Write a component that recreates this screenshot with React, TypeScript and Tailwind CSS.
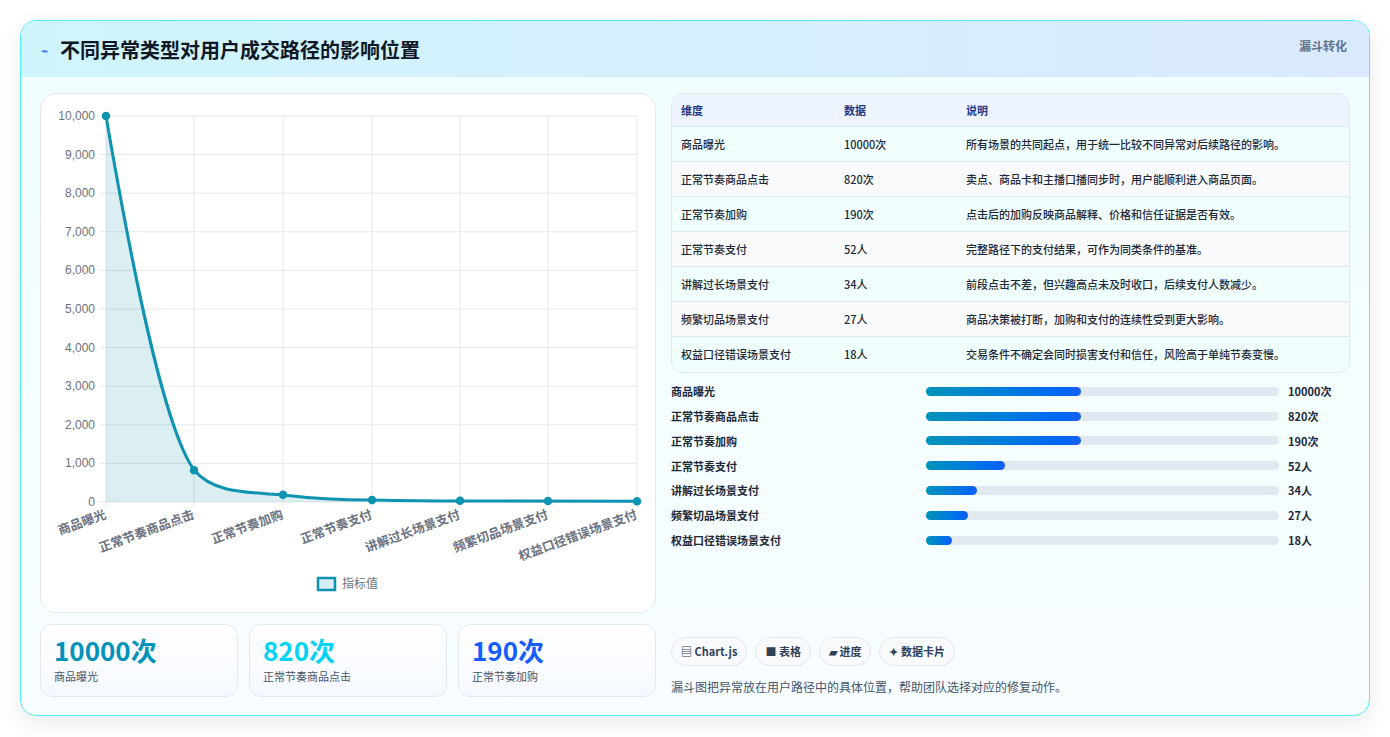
import React from "react";

const F = { fontFamily: '"Noto Sans CJK SC", "Noto Sans", sans-serif' };
const rows = [
  ["商品曝光", "10000次", "所有场景的共同起点，用于统一比较不同异常对后续路径的影响。"],
  ["正常节奏商品点击", "820次", "卖点、商品卡和主播口播同步时，用户能顺利进入商品页面。"],
  ["正常节奏加购", "190次", "点击后的加购反映商品解释、价格和信任证据是否有效。"],
  ["正常节奏支付", "52人", "完整路径下的支付结果，可作为同类条件的基准。"],
  ["讲解过长场景支付", "34人", "前段点击不差，但兴趣高点未及时收口，后续支付人数减少。"],
  ["频繁切品场景支付", "27人", "商品决策被打断，加购和支付的连续性受到更大影响。"],
  ["权益口径错误场景支付", "18人", "交易条件不确定会同时损害支付和信任，风险高于单纯节奏变慢。"],
];
const bars = [44, 44, 44, 22.5, 14.5, 12, 7.5];
const xs = [105, 193, 282, 371, 459, 547, 636];
const vals = [10000, 820, 190, 52, 34, 27, 18];
const yOf = (v: number) => 501 - v * 0.0386;

function Chart() {
  const curve = "M105,115 C135,290 165,430 193,469 C212,492 245,491 282,494 C315,498 340,499 371,499 C420,500 450,500 459,500 L636,500.3";
  return (
    <svg width="615" height="519" viewBox="40 93 615 519" style={{ fontFamily: '"Liberation Sans", "Noto Sans CJK SC", sans-serif' }}>
      {[0, 1, 2, 3, 4, 5, 6, 7, 8, 9, 10].map((i) => {
        const y = 501 - i * 38.6;
        return (
          <g key={i}>
            <line x1="99" x2="636" y1={y} y2={y} stroke="#e5e7eb" />
            <text x="94" y={y + 4} textAnchor="end" fontSize="12" fill="#6b7280">{(i * 1000).toLocaleString("en-US")}</text>
          </g>
        );
      })}
      {xs.map((x) => <line key={x} x1={x} x2={x} y1="115" y2="507" stroke="#e5e7eb" />)}
      <path d={curve + " L636,501 L105,501 Z"} fill="#0e93b0" fillOpacity="0.15" />
      <path d={curve} fill="none" stroke="#0e93b0" strokeWidth="3" />
      {xs.map((x, i) => <circle key={x} cx={x} cy={yOf(vals[i])} r="3.5" fill="#0e93b0" stroke="#0e93b0" strokeWidth="1.5" />)}
      {rows.map((r, i) => (
        <text key={i} transform={`translate(${xs[i] + 1},${517}) rotate(-20)`} textAnchor="end" fontSize="12.5" fill="#6b7280" fontWeight="bold" style={F}>{r[0]}</text>
      ))}
      <rect x="317" y="577" width="17" height="12" fill="#d7eef4" stroke="#0e93b0" strokeWidth="2.5" />
      <text x="341" y="587" fontSize="12" fill="#6b7280" style={F}>指标值</text>
    </svg>
  );
}

export default function App() {
  return (
    <div className="min-h-[737px] bg-white p-5" style={F}>
      <div className="rounded-2xl border border-cyan-300 overflow-hidden bg-gradient-to-b from-[#f0fdfe] to-[#f8fdff] shadow-[0_8px_24px_rgba(0,0,0,0.08)] h-[696px]">
        <div className="h-[56px] flex items-start justify-between px-5 bg-gradient-to-r from-[#cff5fc] to-[#dbeafe]">
          <div className="flex items-center gap-3 mt-[14px]">
            <span className="text-blue-600 text-xs">⌁</span>
            <span className="text-[20px] font-bold text-gray-900">不同异常类型对用户成交路径的影响位置</span>
          </div>
          <span className="text-[12px] font-bold text-slate-500 mt-[16px] mr-[2px]">漏斗转化</span>
        </div>
        <div className="flex gap-[15px] px-[19px] pt-[16px]">
          <div className="w-[616px] flex flex-col gap-[11px]">
            <div className="h-[520px] rounded-2xl border border-slate-200 bg-white overflow-hidden"><Chart /></div>
            <div className="grid grid-cols-3 gap-[11px]">
              {[["10000次", "商品曝光", "text-cyan-600"], ["820次", "正常节奏商品点击", "text-cyan-400"], ["190次", "正常节奏加购", "text-blue-600"]].map(([v, l, c]) => (
                <div key={l} className="h-[73px] rounded-xl border border-slate-200 bg-gradient-to-b from-white to-[#f5f9ff] px-[13px] pt-[8px]">
                  <div className={`text-[26px] font-bold leading-[34px] ${c}`}>{v}</div>
                  <div className="text-[11px] text-slate-600 mt-[1px]">{l}</div>
                </div>
              ))}
            </div>
          </div>
          <div className="flex-1 flex flex-col">
            <div className="rounded-xl border border-slate-200 overflow-hidden">
              <div className="flex h-[33px] items-center bg-[#eef4ff] border-b border-slate-200 text-[11px] font-bold text-[#1e3a8a]">
                <div className="w-[172px] pl-[9px]">维度</div><div className="w-[122px]">数据</div><div>说明</div>
              </div>
              {rows.map((r, i) => (
                <div key={i} className={`flex h-[35px] items-center text-[11px] font-medium text-gray-800 ${i < 6 ? "border-b border-slate-200" : ""} ${i % 2 ? "bg-[#f8fafc]" : "bg-[#f0fefe]"}`}>
                  <div className="w-[172px] pl-[9px]">{r[0]}</div><div className="w-[122px]">{r[1]}</div><div>{r[2]}</div>
                </div>
              ))}
            </div>
            <div className="mt-[6px] flex flex-col">
              {rows.map((r, i) => (
                <div key={i} className="flex items-center h-[24.8px] text-[11px] font-bold text-gray-800">
                  <div className="w-[255px]">{r[0]}</div>
                  <div className="w-[353px] h-[9px] rounded-full bg-slate-200">
                    <div className="h-full rounded-full bg-gradient-to-r from-cyan-600 to-blue-600" style={{ width: `${bars[i]}%` }} />
                  </div>
                  <div className="ml-[9px]">{r[1]}</div>
                </div>
              ))}
            </div>
            <div className="mt-auto mb-[1px] flex flex-col">
              <div className="flex gap-[8px]">
                {["▤ Chart.js", "■ 表格", "▰ 进度", "✦ 数据卡片"].map((c) => (
                  <span key={c} className="h-[29px] flex items-center px-[9px] rounded-full border border-slate-200 bg-[#f8fafc] text-[11px] font-bold text-slate-700">{c}</span>
                ))}
              </div>
              <div className="mt-[12px] text-[12px] text-slate-600">漏斗图把异常放在用户路径中的具体位置，帮助团队选择对应的修复动作。</div>
            </div>
          </div>
        </div>
      </div>
    </div>
  );
}
